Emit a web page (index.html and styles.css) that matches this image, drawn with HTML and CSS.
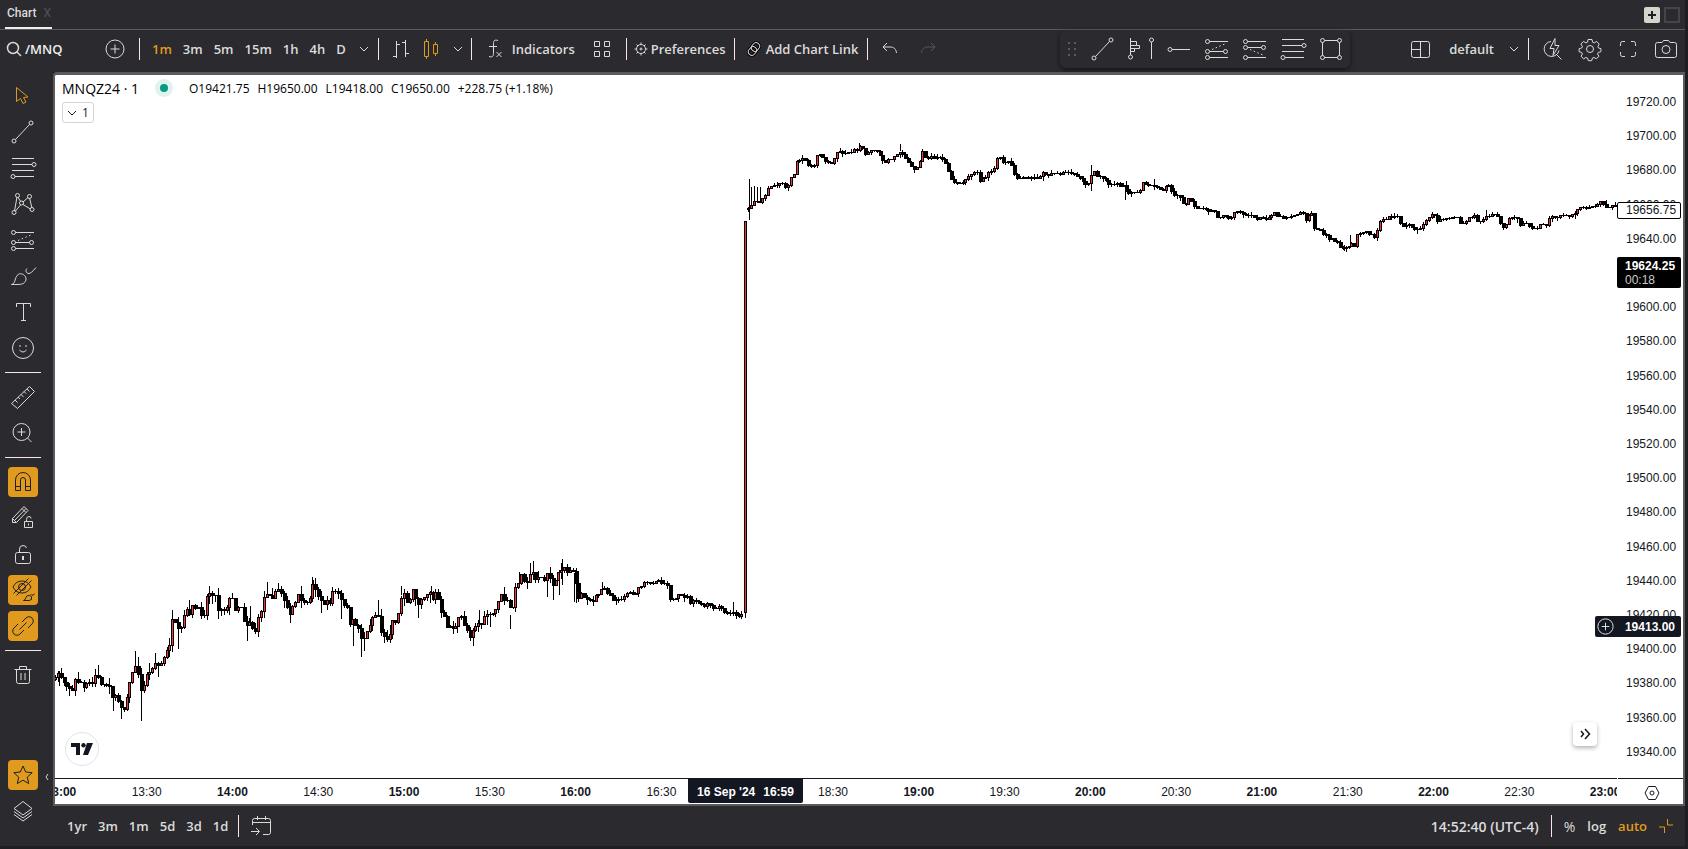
FILE: index.html
```
<!DOCTYPE html>
<html lang="en">
<head>
    <meta charset="utf-8">
    <meta name="viewport" content="width=device-width, initial-scale=1">
    <title>Chart</title>
    <link rel="stylesheet" href="styles.css">
</head>
<body>
<!-- icons used more than once -->
<svg class="sprite" aria-hidden="true">
    <symbol id="i-line" viewBox="0 0 28 28"><circle cx="5" cy="23" r="2"/><circle cx="22" cy="5" r="2"/><path d="M6.5 21.5l14-15"/></symbol>
    <symbol id="i-fib" viewBox="0 0 28 28"><path d="M3 4.5h22M3 10.5h20M3 16.500h22M6 22.500h19"/><circle cx="25" cy="10.500" r="2"/><circle cx="4" cy="22.500" r="2"/></symbol>
    <symbol id="i-proj" viewBox="0 0 28 28"><path d="M6.500 6.500H25M6.500 16.500h14M6.500 22.500H25"/><path d="M9 14.500l14-6" stroke-dasharray="1.500 2.500"/><circle cx="4.500" cy="6.500" r="2"/><circle cx="4.500" cy="16.500" r="2"/><circle cx="22.500" cy="16.500" r="2"/><circle cx="4.500" cy="22.500" r="2"/></symbol>
    <symbol id="i-down" viewBox="0 0 10 10"><path d="M1 3l4 4 4-4"/></symbol>
    <symbol id="i-plus" viewBox="0 0 20 20"><circle cx="10" cy="10" r="9"/><path d="M10 5.500v9M5.500 10h9"/></symbol>
</svg>

<header class="tabs">
    <div class="tab">
        <button class="tab-name">Chart</button>
        <button class="tab-close" aria-label="Close tab">X</button>
    </div>
    <div class="window-buttons">
        <button class="add" aria-label="Add tab"><svg viewBox="0 0 10 10"><path d="M5 1v8M1 5h8"/></svg></button>
        <button class="box" aria-label="Maximize"></button>
    </div>
</header>

<div class="toolbar">
    <label class="search">
        <svg class="icon-s" viewBox="0 0 16 16"><circle cx="7" cy="7" r="5.500"/><path d="M11 11l4 4"/></svg>
        <input type="text" value="/MNQ" aria-label="Symbol">
    </label>
    <button class="compare" aria-label="Compare"><svg class="icon-m"><use href="#i-plus"/></svg></button>
    <i class="sep"></i>
    <div class="intervals">
        <button class="active">1m</button>
        <button>3m</button>
        <button>5m</button>
        <button>15m</button>
        <button>1h</button>
        <button>4h</button>
        <button>D</button>
    </div>
    <button class="more" aria-label="More intervals"><svg class="icon-xs"><use href="#i-down"/></svg></button>
    <i class="sep"></i>
    <div class="styles">
        <button aria-label="Bars"><svg class="icon" viewBox="0 0 28 28"><path d="M9.500 6v17M9.500 9.500H13M6 21.500h3.500M18.500 5v17M15 7.500h3.500M18.500 18.500H22"/></svg></button>
        <button class="active" aria-label="Candles"><svg class="icon" viewBox="0 0 28 28"><path d="M7.500 6.500h4v15h-4zM9.500 4v2.500M9.500 21.500V24M16.500 9.500h4v9h-4zM18.500 7v2.500M18.500 18.500V21"/></svg></button>
        <button class="more" aria-label="More styles"><svg class="icon-xs"><use href="#i-down"/></svg></button>
    </div>
    <i class="sep"></i>
    <button class="with-icon indicators">
        <svg class="icon" viewBox="0 0 28 28"><path d="M17 5.500c-3.500-1-4.500 0-4.500 3v10c0 3-1.500 4-4.500 3M8 11.500h8M15.500 17l5 5M20.500 17l-5 5"/></svg>
        Indicators
    </button>
    <button class="templates" aria-label="Templates"><svg class="icon" viewBox="0 0 28 28"><path d="M6.500 6.500h5v5h-5zM16.500 6.500h5v5h-5zM6.500 16.500h5v5h-5zM16.500 16.500h5v5h-5z"/></svg></button>
    <i class="sep"></i>
    <button class="with-icon prefs">
        <svg class="icon-s" viewBox="0 0 16 16"><circle cx="8" cy="8" r="4.500"/><circle cx="8" cy="8" r="1"/><path d="M8 1.500v2M8 12.500v2M1.500 8h2M12.500 8h2M3.500 3.500l1.500 1.500M11 11l1.500 1.500M3.500 12.500L5 11M11 5l1.500-1.500"/></svg>
        Preferences
    </button>
    <i class="sep"></i>
    <button class="with-icon link">
        <svg class="icon-s" viewBox="0 0 16 16"><g class="chain-edge"><rect x="6" y="1.500" width="7" height="9" rx="3.500" transform="rotate(40 9.500 6)"/><rect x="3" y="5.500" width="7" height="9" rx="3.500" transform="rotate(40 6.500 10)"/></g><rect x="6" y="1.500" width="7" height="9" rx="3.500" transform="rotate(40 9.500 6)"/><rect x="3" y="5.500" width="7" height="9" rx="3.500" transform="rotate(40 6.500 10)"/></svg>
        Add Chart Link
    </button>
    <i class="sep"></i>
    <button class="undo" aria-label="Undo"><svg class="icon" viewBox="0 0 28 28"><path d="M11 8l-4 4 4 4M7 12h7c4 0 6 2 6.500 6"/></svg></button>
    <button class="redo" aria-label="Redo"><svg class="icon" viewBox="0 0 28 28"><path d="M17 8l4 4-4 4M21 12h-7c-4 0-6 2-6.500 6"/></svg></button>

    <div class="favorites">
        <svg class="grip" viewBox="0 0 8 14"><path d="M0 1h2M6 1h2M0 7h2M6 7h2M0 13h2M6 13h2"/></svg>
        <button aria-label="Trend line"><svg class="icon"><use href="#i-line"/></svg></button>
        <button aria-label="Volume profile"><svg class="icon" viewBox="0 0 28 28"><path d="M3.500 3v17M3.500 6.500h6v4h3v3h-5v3h-4M3.500 10.500h6M3.500 13.500h4M24.500 7v17"/><circle cx="3.500" cy="22" r="2"/><circle cx="24.500" cy="5" r="2"/></svg></button>
        <button aria-label="Horizontal ray"><svg class="icon" viewBox="0 0 28 28"><circle cx="5" cy="14.500" r="2"/><path d="M7 14.500h18"/></svg></button>
        <button aria-label="Long position"><svg class="icon"><use href="#i-proj"/></svg></button>
        <button aria-label="Short position"><svg class="icon" viewBox="0 0 28 28"><path d="M6.500 6.500H25M6.500 12.500h14M6.500 22.500H25"/><path d="M9 14.500l14 6" stroke-dasharray="1.500 2.500"/><circle cx="4.500" cy="6.500" r="2"/><circle cx="4.500" cy="12.500" r="2"/><circle cx="22.500" cy="12.500" r="2"/><circle cx="4.500" cy="22.500" r="2"/></svg></button>
        <button aria-label="Fib retracement"><svg class="icon"><use href="#i-fib"/></svg></button>
        <button aria-label="Rectangle"><svg class="icon" viewBox="0 0 28 28"><path d="M7.500 5.500h13M7.500 22.500h13M5.500 7.500v13M22.500 7.500v13"/><circle cx="5.500" cy="5.500" r="2"/><circle cx="22.500" cy="5.500" r="2"/><circle cx="5.500" cy="22.500" r="2"/><circle cx="22.500" cy="22.500" r="2"/></svg></button>
    </div>

    <div class="toolbar-right">
        <button aria-label="Layout"><svg class="icon" viewBox="0 0 28 28"><rect x="5.500" y="6.500" width="18" height="16" rx="2"/><path d="M14.500 6.500v16M5.500 14.500h9"/></svg></button>
        <button class="layout-name">default</button>
        <button class="more" aria-label="Layouts"><svg class="icon-xs"><use href="#i-down"/></svg></button>
        <i class="sep"></i>
        <div class="actions">
            <button aria-label="Quick search"><svg class="icon" viewBox="0 0 28 28"><path d="M13 6.500a7.500 7.500 0 1 0 8 9M18.500 19.500l5 5M17 3.500l-5 10h4l-1 7 6-10h-4z"/></svg></button>
            <button aria-label="Settings"><svg class="icon" viewBox="0 0 28 28"><circle cx="14" cy="14" r="3.500"/><path d="M12 4.500h4l.6 2.700 1.700.7 2.400-1.500 2.500 2.700-1.300 2.300.6 1.600 2.500.7v1.500l-.2 1.600-2.500.6-.8 1.600 1.500 2.300-2.700 2.500-2.200-1.300-1.700.6-.7 2.600h-3.400l-.7-2.600-1.700-.6-2.300 1.300-2.600-2.500 1.400-2.300-.7-1.600-2.600-.6v-3.100l2.600-.7.7-1.600-1.500-2.300 2.600-2.700 2.400 1.500 1.600-.7z"/></svg></button>
            <button aria-label="Fullscreen"><svg class="icon" viewBox="0 0 28 28"><path d="M6.500 11V8.500q0-2 2-2H11M17 6.500h2.500q2 0 2 2V11M21.500 17v2.500q0 2-2 2H17M11 21.500H8.500q-2 0-2-2V17"/></svg></button>
            <button aria-label="Snapshot"><svg class="icon" viewBox="0 0 28 28"><path d="M10 7.500l1.500-2h5l1.500 2h4.500q2 0 2 2v11q0 2-2 2h-17q-2 0-2-2v-11q0-2 2-2z"/><circle cx="14" cy="14.500" r="4"/></svg></button>
        </div>
    </div>
</div>

<div class="workspace">
    <aside class="sidebar">
        <button class="active" aria-label="Cursor"><svg class="icon" viewBox="0 0 28 28"><path d="M7.500 5.500v14l4-3 2.500 5 3-1.500-2.500-4.500 4.500-.500z"/></svg></button>
        <button aria-label="Trend line"><svg class="icon"><use href="#i-line"/></svg></button>
        <button aria-label="Fib retracement"><svg class="icon"><use href="#i-fib"/></svg></button>
        <button aria-label="Patterns"><svg class="icon" viewBox="0 0 28 28"><path d="M5.500 21L8 7M6.500 21l5-6M9 7.500l3 4.500M14 12l5-4.500M14 14.500l7.500 4.500M20.500 8l2.500 10"/><circle cx="5" cy="22.500" r="2"/><circle cx="8.500" cy="5.500" r="2"/><circle cx="12.500" cy="13" r="2"/><circle cx="20.500" cy="6.500" r="2"/><circle cx="23" cy="19.500" r="2"/></svg></button>
        <button aria-label="Projection"><svg class="icon"><use href="#i-proj"/></svg></button>
        <button aria-label="Brush"><svg class="icon" viewBox="0 0 28 28"><path d="M2.500 22.500c4-1 3-5 5-8 2-4 6-3 8-1s2 5 0 7-4 2-13 2zM18 6.500c-2 2-1 5 2 5q2 0 7-6"/></svg></button>
        <button aria-label="Text"><svg class="icon" viewBox="0 0 28 28"><path d="M7.500 9V5.500h14V9M14.500 5.500v17M12 22.500h5"/></svg></button>
        <button aria-label="Emoji"><svg class="icon" viewBox="0 0 28 28"><circle cx="14" cy="14" r="10.500"/><path d="M10.500 16q3.500 4 7 0M10 12h2M16 12h2"/></svg></button>
        <hr>
        <button aria-label="Measure"><svg class="icon" viewBox="0 0 28 28"><path d="M2.500 20.500L20.500 3.500l5 5-17 17zM6 17l2.500 2.500M9 14l2 2M12 11.500l2.500 2.500M15 8.500l2 2M18 6l2.500 2.500"/></svg></button>
        <button aria-label="Zoom in"><svg class="icon" viewBox="0 0 28 28"><circle cx="12.500" cy="13" r="8.500"/><path d="M12.500 9v8M8.500 13h8M18.500 19l4 4"/></svg></button>
        <hr>
        <button class="on" aria-label="Magnet"><svg class="icon" viewBox="0 0 28 28"><path d="M6.500 22.500V12a7.500 7.500 0 0 1 15 0v10.500h-5V12a2.500 2.500 0 0 0-5 0v10.500zM6.500 18.500h5M16.500 18.500h5"/></svg></button>
        <button aria-label="Keep drawing"><svg class="icon" viewBox="0 0 28 28"><path d="M3.500 18.500v-4L15 2.500l4 4-11.500 12zM3.500 14.500l4 4M6 16L17 4.500M13 4.500l4 4M15.500 17.500h8v6h-8zM17.500 17.500v-2q0-3 2.500-3 2 0 2 2M19.500 19.500v2"/></svg></button>
        <button aria-label="Lock drawings"><svg class="icon" viewBox="0 0 28 28"><rect x="6.500" y="12.500" width="15" height="11" rx="2"/><path d="M10.500 12.500V9q0-3.500 3.500-3.500 3 0 3.500 2.500"/><path d="M14 16v4" stroke-width="2"/></svg></button>
        <button class="on" aria-label="Hide drawings"><svg class="icon" viewBox="0 0 28 28"><path d="M4 11q3-6 9-6t9 6q-3 6-9 6t-9-6zM4.500 17.500l15-15M7.500 19.500l15-15"/><circle cx="13" cy="11" r="3.500"/><path d="M14.500 24.500q2-.500 2.500-3t3.500-2 2 4q-1 1.500-8 1zM21.500 18q1 3 4 0"/></svg></button>
        <button class="on" aria-label="Sync drawings"><svg class="icon" viewBox="0 0 28 28"><path d="M13 10l4-4a4 4 0 0 1 6 6l-4 4M15 18l-4 4a4 4 0 0 1-6-6l4-4M10.500 17.500l7-7"/></svg></button>
        <hr>
        <button aria-label="Remove"><svg class="icon" viewBox="0 0 28 28"><path d="M5.500 8.500h17M7.500 8.500v12q0 2 2 2h9q2 0 2-2v-12M10.500 8.500v-3h7v3M12 12v7M16 12v7"/></svg></button>
        <div class="sidebar-bottom">
            <button class="on" aria-label="Favorites"><svg class="icon" viewBox="0 0 28 28"><path d="M14 5l2.700 6 6.500.700-4.900 4.400 1.400 6.400L14 19.200l-5.700 3.300 1.400-6.400-4.900-4.400 6.500-.700z"/></svg></button>
            <button aria-label="Object tree"><svg class="icon" viewBox="0 0 28 28"><path d="M14 4.500l9 7-9 6.500-9-6.500zM5 14.500l9 6.500 9-6.500M5 17.500l9 6.500 9-6.500"/></svg></button>
        </div>
        <button class="collapse" aria-label="Collapse toolbar"><svg viewBox="0 0 4 8"><path d="M3 1L1 4l2 3"/></svg></button>
    </aside>

    <main class="main">
        <section class="chart">
            <div class="plot">
                <svg id="candles" class="candles"></svg>
                <div class="legend">
                    <div class="legend-row">
                        <span class="symbol">MNQZ24 · 1</span>
                        <span class="status"></span>
                        <span>O19421.75</span><span>H19650.00</span><span>L19418.00</span><span>C19650.00</span><span>+228.75 (+1.18%)</span>
                    </div>
                    <button class="legend-toggle"><svg class="icon-xs"><use href="#i-down"/></svg>1</button>
                </div>
                <a class="brand" href="#" aria-label="TradingView"><svg viewBox="0 0 22 12"><path d="M0 0h9v12H5V4H0zM16 0h6l-5 12h-5z"/><circle cx="12.500" cy="2.200" r="2.200"/></svg></a>
                <button class="to-latest" aria-label="Scroll to latest"><svg viewBox="0 0 12 12"><path d="M2 3l2.500 3L2 9M6 1l4.500 5L6 11"/></svg></button>
            </div>
            <div class="prices">
                <ul id="prices"></ul>
                <div class="tag tag-close">19656.75</div>
                <div class="tag tag-last"><b>19624.25</b><span>00:18</span></div>
                <div class="tag tag-cross"><button aria-label="Add order"><svg><use href="#i-plus"/></svg></button><b>19413.00</b></div>
            </div>
            <div class="times">
                <ul id="times"></ul>
                <div class="time-tag"><span>16 Sep '24</span><span>16:59</span></div>
            </div>
            <div class="corner">
                <button aria-label="Axis settings"><svg viewBox="0 0 16 16"><path d="M4.500 1.500h7L15 8l-3.500 6.500h-7L1 8z"/><circle cx="8" cy="8" r="2"/></svg></button>
            </div>
        </section>

        <footer class="footer">
            <div class="ranges">
                <button>1yr</button>
                <button>3m</button>
                <button>1m</button>
                <button>5d</button>
                <button>3d</button>
                <button>1d</button>
            </div>
            <i class="sep"></i>
            <button class="goto" aria-label="Go to date"><svg class="icon" viewBox="0 0 28 28"><path d="M5.500 13V8.500q0-2 2-2h14q2 0 2 2v12q0 2-2 2H16M5.500 10.500h18M10.500 4v4M18.500 4v4M4 19.500h8M9 16l3.500 3.500L9 23"/></svg></button>
            <div class="footer-right">
                <button class="clock">14:52:40 (UTC-4)</button>
                <i class="sep"></i>
                <button class="pct">%</button>
                <button>log</button>
                <button class="active">auto</button>
                <button class="active shrink" aria-label="Minimize"><svg viewBox="0 0 14 14"><path d="M0 8h5.500v6M8.500 0v6H14"/></svg></button>
            </div>
        </footer>
    </main>
</div>
<script src="chart.js"></script>
</body>
</html>
```
FILE: styles.css
```
* {
    box-sizing: border-box;
}

body {
    margin: 0;
    height: 100vh;
    display: flex;
    flex-direction: column;
    overflow: hidden;
    background: #1f1e23;
    border-bottom: 3px solid #1f1e23;
    color: #dbdbdb;
    font-family: "Open Sans", "Noto Sans", sans-serif;
    font-size: 13px;
    font-weight: 600;
}

button {
    display: flex;
    align-items: center;
    justify-content: center;
    padding: 0;
    border: none;
    background: none;
    color: inherit;
    font: inherit;
    white-space: nowrap;
    flex-shrink: 0;
}

svg {
    display: block;
    fill: none;
    stroke: currentColor;
    flex-shrink: 0;
}

ul {
    list-style: none;
    margin: 0;
    padding: 0;
}

.sprite {
    display: none;
}

.icon {
    width: 28px;
    height: 28px;
}

.icon-m {
    width: 20px;
    height: 20px;
}

.icon-s {
    width: 16px;
    height: 16px;
}

.icon-xs {
    width: 10px;
    height: 10px;
}

.active {
    color: #e09a1d;
}

.sep {
    width: 1px;
    height: 22px;
    background: #fbe4ee;
    flex-shrink: 0;
}

/* tabs */

.tabs {
    display: flex;
    justify-content: space-between;
    height: 30px;
    margin-right: 3px;
    padding: 0 5px;
    background: #2b2a2f;
    border-bottom: 1px solid #5b5b5b;
    flex-shrink: 0;
}

.tab {
    display: flex;
    gap: 7px;
    height: 29px;
    padding: 0 1px 2px 2px;
    border-bottom: 2px solid #eeeeee;
    font: 500 12px Roboto, sans-serif;
}

.tab-close {
    color: #4c4c50;
}

.window-buttons {
    display: flex;
    align-items: center;
    gap: 4px;
}

.add, .box {
    width: 16px;
    height: 16px;
    border-radius: 2px;
}

.add {
    background: #d3d6cc;
    color: #1f1e23;
}

.add svg {
    width: 10px;
    height: 10px;
    stroke-width: 2;
}

.box {
    border: 2px solid #454549;
    border-radius: 0;
}

/* top toolbar */

.toolbar {
    display: flex;
    align-items: center;
    height: 42px;
    margin-right: 3px;
    padding: 0 5px 4px 6px;
    background: #2b2a2f;
    flex-shrink: 0;
}

.search {
    display: flex;
    align-items: center;
    gap: 3px;
    width: 99px;
}

.search .icon-s {
    stroke-width: 1.5;
}

.search input {
    width: 64px;
    padding: 0;
    border: none;
    outline: none;
    background: none;
    color: #eeeeee;
    font: inherit;
}

.compare {
    margin-right: 14px;
}

.intervals {
    display: flex;
    gap: 11px;
    padding: 0 10px 0 12px;
}

.more {
    width: 22px;
}

.toolbar > .more {
    width: 16px;
    margin-right: 6px;
}

.styles {
    display: flex;
    margin: 0 2px 0 8px;
    gap: 2px;
}

.with-icon {
    gap: 4px;
}

.indicators {
    padding-left: 9px;
    gap: 3px;
}

.templates {
    margin: 0 10px 0 13px;
}

.prefs {
    padding: 0 8px 0 6px;
    gap: 2px;
}

.link {
    padding: 0 9px 0 11px;
}

.chain-edge {
    stroke: #000000;
    stroke-width: 3;
}

.undo {
    margin: 0 10px 0 8px;
}

.redo {
    color: #58585c;
}

.favorites {
    display: flex;
    align-items: center;
    gap: 10px;
    height: 38px;
    margin-left: auto;
    padding: 0 5px 0 8px;
    border-radius: 6px;
    background: #2b2a2f;
    box-shadow: 0 2px 5px rgba(0, 0, 0, .5);
}

.grip {
    width: 8px;
    height: 14px;
    margin-right: 3px;
    stroke: #5b5b5b;
    stroke-width: 2;
}

.toolbar-right {
    display: flex;
    align-items: center;
    margin-left: 56px;
    gap: 3px;
}

.layout-name {
    margin: 0 6px 0 12px;
}

.actions {
    display: flex;
    gap: 10px;
    margin-left: 6px;
}

/* drawing tools */

.workspace {
    flex: 1;
    min-height: 0;
    display: flex;
}

.sidebar {
    position: relative;
    width: 53px;
    padding: 6px 12px 17px 5px;
    display: flex;
    flex-direction: column;
    background: #2b2a2f;
    flex-shrink: 0;
}

.sidebar button {
    height: 30px;
    width: 30px;
    margin: 3px;
    border-radius: 4px;
}

.sidebar .on {
    background: #e09a1d;
    color: #1f1e23;
}

.sidebar hr {
    width: 36px;
    height: 1px;
    margin: 6px 0;
    border: none;
    background: #fbe4ee;
    flex-shrink: 0;
}

.sidebar-bottom {
    margin-top: auto;
}

.sidebar-bottom button + button {
    margin-top: 6px;
}

.sidebar .collapse {
    position: absolute;
    right: 3px;
    bottom: 54px;
    width: 6px;
    margin: 0;
}

.collapse svg {
    width: 4px;
    height: 8px;
}

/* chart */

.main {
    flex: 1;
    min-width: 0;
    display: flex;
    flex-direction: column;
}

.chart {
    flex: 1;
    min-height: 0;
    margin-right: 3px;
    border: 3px solid #5b5b5b;
    border-left-width: 2px;
    border-right-width: 2px;
    border-bottom-width: 2px;
    border-top-left-radius: 4px;
    display: grid;
    grid-template-columns: 1fr 66px;
    grid-template-rows: 1fr 25px;
    background: #ffffff;
    color: #131722;
    font-family: "Liberation Sans", Arial, sans-serif;
    font-size: 12px;
    font-weight: 400;
}

.plot {
    position: relative;
    overflow: hidden;
    border-bottom: 1px solid #131722;
}

.candles {
    position: absolute;
    inset: 0;
    width: 100%;
    height: 100%;
    stroke: none;
    shape-rendering: crispEdges;
}

.wicks, .bodies {
    fill: #000000;
}

.ups {
    fill: #f7323f;
}

.legend {
    position: relative;
    padding: 3px 7px;
    color: #000000;
    font-family: "Open Sans", "Noto Sans", sans-serif;
    font-size: 12px;
}

.legend-row {
    display: flex;
    align-items: center;
    height: 20px;
    gap: 8px;
}

.symbol {
    font-size: 14px;
}

.status {
    width: 18px;
    height: 18px;
    margin: 0 8px;
    border: 5px solid #dff2ee;
    border-radius: 50%;
    background: #089981;
}

.legend-toggle {
    gap: 5px;
    width: 32px;
    height: 21px;
    margin-top: 4px;
    border: 1px solid #d1d4dc;
    border-radius: 3px;
    color: #131722;
}

.brand {
    position: absolute;
    left: 10px;
    bottom: 12px;
    width: 34px;
    height: 34px;
    border: 1px solid #e0e3eb;
    border-radius: 50%;
    background: #ffffff;
    display: flex;
    align-items: center;
    justify-content: center;
}

.brand svg {
    width: 22px;
    height: 12px;
    fill: #131722;
    stroke: none;
}

.to-latest {
    position: absolute;
    right: 20px;
    bottom: 32px;
    width: 24px;
    height: 24px;
    border-radius: 4px;
    background: #ffffff;
    color: #131722;
    box-shadow: 0 2px 4px rgba(0, 0, 0, .3);
}

.to-latest svg {
    width: 12px;
    height: 12px;
    stroke-width: 1.5;
}

.prices {
    position: relative;
    border-bottom: 1px solid #131722;
    margin-left: 1px;
}

.prices ul {
    height: 100%;
    padding: 19px 8px 18px;
    display: flex;
    flex-direction: column;
    justify-content: space-between;
}

.prices li {
    height: 16px;
    line-height: 16px;
    text-align: right;
}

.tag {
    position: absolute;
    left: -1px;
    right: 2px;
    padding: 0 6px 0 8px;
    border-radius: 2px;
    text-align: right;
}

.tag-close {
    top: 127px;
    line-height: 15px;
    padding-right: 5px;
    border: 1px solid #000000;
    background: #ffffff;
}

.tag-last {
    top: 182px;
    height: 31px;
    padding-top: 2px;
    background: #000000;
    color: #ffffff;
    line-height: 14px;
    display: flex;
    flex-direction: column;
    align-items: flex-start;
}

.tag-last span {
    color: #cccccc;
}

.tag-cross {
    bottom: 141px;
    left: -23px;
    height: 21px;
    padding-left: 2px;
    background: #131722;
    color: #ffffff;
    display: flex;
    align-items: center;
    justify-content: space-between;
}

.tag-cross svg {
    width: 17px;
    height: 17px;
}

.times {
    position: relative;
    overflow: hidden;
}

/* the first and last labels run past the pane */
.times ul {
    margin: 0 -31px 0 -37px;
    display: grid;
    grid-template-columns: repeat(19, 1fr);
}

.times li {
    line-height: 27px;
    text-align: center;
}

.times li:nth-child(odd) {
    font-weight: 700;
}

.time-tag {
    position: absolute;
    left: 633px;
    top: 0;
    width: 115px;
    height: 24px;
    padding-top: 2px;
    display: flex;
    align-items: center;
    justify-content: center;
    gap: 8px;
    border-radius: 0 0 2px 2px;
    background: #131722;
    color: #ffffff;
    font-weight: 700;
}

.corner {
    display: flex;
    align-items: center;
    justify-content: center;
    padding: 2px 0 0 4px;
}

.corner svg {
    width: 16px;
    height: 16px;
}

/* bottom toolbar */

.footer {
    height: 40px;
    margin-right: 3px;
    padding: 0 12px 0 14px;
    background: #2b2a2f;
    display: flex;
    align-items: center;
    flex-shrink: 0;
}

.ranges {
    display: flex;
    gap: 11px;
    margin-right: 10px;
}

.goto {
    margin-left: 8px;
}

.footer-right {
    display: flex;
    align-items: center;
    gap: 12px;
    margin-left: auto;
}

.clock, .pct {
    font-size: 14px;
}

.pct {
    font-weight: 400;
}

.shrink svg {
    width: 14px;
    height: 14px;
}
```
FILE: chart.js
```
const SPACING = 2.86;
const GAP_X = 690;

// turning points of the one minute closes: x, y
const before = [
    0,604, 4,596, 7,605, 13,610, 17,616, 20,605, 26,607, 30,616, 32,608, 38,608, 41,596, 43,604, 48,610, 56,609,
    58,629, 61,619, 64,628, 69,634, 72,617, 75,606, 78,592, 82,593, 84,602, 87,626, 90,598, 96,598, 98,586,
    104,591, 109,582, 114,571, 118,541, 121,553, 125,557, 128,545, 130,532, 133,540, 137,532, 142,533, 146,538,
    150,537, 152,517, 157,517, 160,520, 162,534, 165,532, 170,534, 174,525, 178,523, 181,537, 184,528, 187,532,
    190,554, 193,545, 196,547, 199,560, 204,541, 207,531, 210,517, 215,518, 218,522, 224,513, 228,523, 232,530,
    234,542, 236,539, 238,528, 241,528, 244,519, 248,529, 253,529, 256,513, 259,508, 262,518, 266,527, 274,528,
    278,515, 282,517, 285,522, 289,532, 292,530, 294,552, 298,545, 303,553, 307,564, 310,562, 314,550, 318,540,
    323,540, 325,550, 327,562, 334,562, 336,545, 341,545, 344,537, 347,516, 351,517, 353,541, 356,514, 360,519,
    362,537, 364,522, 370,521, 374,514, 378,525, 380,517, 384,526, 385,537, 390,544, 392,551, 396,552, 402,552,
    404,539, 407,543, 410,551, 416,562, 418,552, 422,548, 428,549, 430,537, 435,541, 440,536, 442,528, 445,520,
    448,521, 450,528, 454,526, 456,545, 459,520, 462,508, 466,500, 470,505, 474,505, 476,494, 480,502, 485,501,
    490,506, 493,496, 496,507, 500,511, 502,498, 508,490, 512,497, 516,492, 519,498, 522,522, 527,518, 530,522,
    538,526, 542,519, 545,518, 548,510, 552,518, 556,520, 558,525, 564,525, 568,522, 573,517, 580,518, 582,514,
    590,507, 594,509, 602,504, 607,507, 613,509, 614,523, 619,526, 624,520, 632,522, 635,527, 642,526, 648,532,
    653,528, 657,534, 664,531, 668,537, 673,539, 677,537, 682,541, 689,537
];

const after = [
    693,134, 694,128, 696,129, 699,125, 704,127, 708,122, 712,118, 714,109, 722,110, 725,106, 730,112, 734,107,
    736,103, 739,97, 742,86, 747,84, 752,86, 754,91, 759,91, 762,78, 766,78, 770,86, 777,89, 780,77, 787,77,
    795,78, 797,74, 803,73, 805,70, 809,78, 814,78, 817,74, 822,77, 825,82, 828,87, 835,84, 840,81, 844,75,
    848,78, 851,83, 854,90, 859,93, 864,89, 867,76, 870,81, 878,83, 884,81, 888,85, 892,92, 895,102, 897,106,
    907,108, 911,102, 917,97, 922,98, 925,106, 928,104, 933,98, 940,93, 943,78, 947,86, 956,88, 960,103,
    966,102, 972,103, 981,103, 988,98, 993,99, 1000,97, 1005,99, 1010,98, 1018,98, 1023,101, 1028,108,
    1035,108, 1037,95, 1042,100, 1049,102, 1052,109, 1062,109, 1069,111, 1072,118, 1077,116, 1084,118,
    1086,111, 1088,106, 1095,112, 1100,109, 1106,116, 1112,108, 1115,114, 1118,120, 1125,122, 1130,132,
    1132,123, 1136,124, 1138,132, 1143,134, 1149,134, 1154,136, 1157,134, 1162,141, 1172,142, 1178,140,
    1180,133, 1186,138, 1195,141, 1202,143, 1212,144, 1214,140, 1220,137, 1224,142, 1235,141, 1244,137,
    1248,138, 1251,144, 1254,139, 1257,139, 1259,152, 1264,155, 1268,159, 1274,163, 1278,164, 1283,168,
    1286,173, 1293,174, 1295,167, 1299,172, 1303,157, 1309,155, 1314,158, 1320,162, 1322,155, 1326,143,
    1334,142, 1341,139, 1346,151, 1354,148, 1357,154, 1364,154, 1368,148, 1373,141, 1378,139, 1384,147,
    1387,143, 1397,142, 1403,143, 1405,150, 1410,147, 1415,142, 1420,141, 1424,148, 1428,143, 1437,140,
    1443,140, 1446,151, 1451,150, 1453,144, 1462,143, 1466,152, 1470,147, 1474,152, 1482,153, 1486,148,
    1491,150, 1494,143, 1499,141, 1515,140, 1521,136, 1524,130, 1530,134, 1539,132, 1544,126, 1552,131, 1562,131
];

// long wicks: x, top, bottom
const spikes = [
    [4,596,611], [14,610,618], [23,597,607], [43,590,600], [58,620,636], [66,628,644], [80,576,594], [86,610,646],
    [100,578,588], [103,588,602], [117,535,545], [123,550,574], [134,525,535], [154,511,520], [163,530,544],
    [192,545,566], [195,531,547], [212,507,520], [223,508,515], [235,540,548], [246,511,525], [258,505,512],
    [266,525,538], [286,522,544], [298,545,571], [306,560,582], [309,560,576], [323,525,542], [329,560,568],
    [335,550,568], [346,511,520], [363,530,543], [376,511,520], [402,550,558], [415,560,565], [424,535,548],
    [435,540,552], [449,512,525], [455,540,554], [464,497,508], [475,488,500], [478,486,500], [492,500,522],
    [498,507,525], [504,495,520], [507,484,510], [519,498,527], [521,510,528], [532,520,530], [547,507,515],
    [561,522,530], [678,527,538], [681,538,544], [690,537,543], [694,104,145], [696,112,130], [699,111,128],
    [702,112,128], [705,112,128], [804,68,72], [845,69,76], [1036,90,116], [1070,112,125], [1099,104,110],
    [1289,170,176], [1295,160,172], [1362,152,159], [1431,135,143]
];

let seed = 7;
function rand() {
    seed = (seed * 16807) % 2147483647;
    return seed / 2147483647;
}

function valueAt(points, x) {
    for (let i = 2; i < points.length; i += 2) {
        if (x <= points[i]) {
            const t = (x - points[i - 2]) / (points[i] - points[i - 2]);
            return points[i - 1] + (points[i + 1] - points[i - 1]) * t;
        }
    }
    return points[points.length - 1];
}

let wicks = "", bodies = "", ups = "";

function rect(x, y, w, h) {
    return `M${x} ${y}h${w}v${h}h${-w}z`;
}

function candle(x, open, close, high, low) {
    const top = Math.min(open, close);
    const h = Math.max(1, Math.abs(open - close) + 1);
    wicks += rect(x, high, 1, low - high);
    bodies += rect(x - 1, top, close < open ? 3 : 4, h);
    if (close < open && h > 2) ups += rect(x, top + 1, 1, h - 2);
}

// calm stretches get smaller bodies and wicks
function series(points, from, to, noise, wick) {
    let open = points[1];
    for (let x = from; x < to; x += SPACING) {
        const calm = x > 530 && x < GAP_X ? 0.5 : 1;
        const close = Math.round(valueAt(points, x) + (rand() - 0.5) * noise * calm);
        const high = Math.min(open, close) - Math.round(rand() * rand() * wick * calm);
        const low = Math.max(open, close) + 1 + Math.round(rand() * rand() * wick * calm);
        candle(Math.round(x), open, close, high, low);
        open = close;
    }
}

series(before, 0, GAP_X - 1, 5, 9);
candle(GAP_X, 537, 146, 146, 541);
series(after, GAP_X + 3, 1562, 3, 4);
spikes.forEach(([x, top, bottom]) => wicks += rect(x, top, 1, bottom - top));

document.getElementById("candles").innerHTML =
    `<path class="wicks" d="${wicks}"/><path class="bodies" d="${bodies}"/><path class="ups" d="${ups}"/>`;

// 19620 lies behind the last price
let prices = "";
for (let p = 19720; p >= 19340; p -= 20) prices += `<li>${p == 19620 ? "" : p + ".00"}</li>`;
document.getElementById("prices").innerHTML = prices;

// the session is closed from 17:00 to 18:00, and 18:00 lies behind the crosshair time
let times = "";
for (let t = 13; t <= 23; t += 0.5) {
    if (t == 17 || t == 17.5) continue;
    times += `<li>${t == 18 ? "" : Math.floor(t) + ":" + (t % 1 ? "30" : "00")}</li>`;
}
document.getElementById("times").innerHTML = times;
```
